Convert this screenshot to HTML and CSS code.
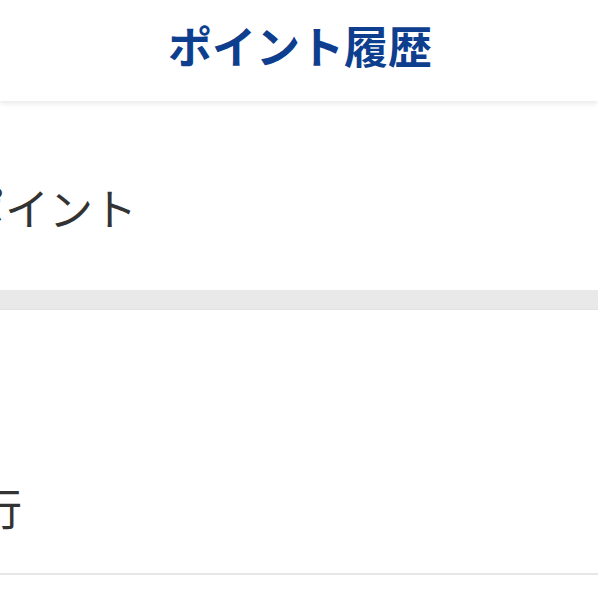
FILE: index.html
```html
<!DOCTYPE html>
<html lang="ja">
<head>
<meta charset="utf-8">
<link rel="stylesheet" href="styles.css">
</head>
<body>
<header class="header">
  <h1 class="title">ポイント履歴</h1>
</header>
<section class="row row-first">
  <span class="label label-first">ポイント</span>
</section>
<div class="divider-band"></div>
<section class="row row-second">
  <span class="label label-second">行</span>
</section>
<div class="bottom-line"></div>
</body>
</html>
```
FILE: styles.css
```css
html, body {
  margin: 0;
  padding: 0;
  background: #ffffff;
  overflow: hidden;
}
body {
  font-family: "Noto Sans CJK JP", "Noto Sans", sans-serif;
  width: 598px;
  height: 598px;
}
.header {
  height: 101px;
  display: flex;
  align-items: center;
  justify-content: center;
  background: #ffffff;
  box-shadow: 0 2px 6px rgba(0, 0, 0, 0.10);
  position: relative;
  z-index: 1;
}
.title {
  margin: 0;
  font-size: 44px;
  font-weight: 700;
  color: #0e3e8e;
  line-height: 1;
  padding-bottom: 11px;
  padding-left: 2px;
}
.row {
  display: flex;
  align-items: center;
  background: #ffffff;
  overflow: hidden;
}
.row-first {
  height: 189px;
  padding-top: 22px;
  box-sizing: border-box;
}
.row-second {
  height: 263px;
  padding-top: 131px;
  box-sizing: border-box;
}
.label {
  font-size: 44px;
  color: #333333;
  line-height: 1;
  white-space: nowrap;
}
.label-first {
  margin-left: -39px;
}
.label-second {
  margin-left: -22px;
}
.divider-band {
  height: 19px;
  background: #e9e9e9;
  border-bottom: 1px solid #e2e2e2;
}
.bottom-line {
  height: 2px;
  background: #e6e6e6;
}
```
